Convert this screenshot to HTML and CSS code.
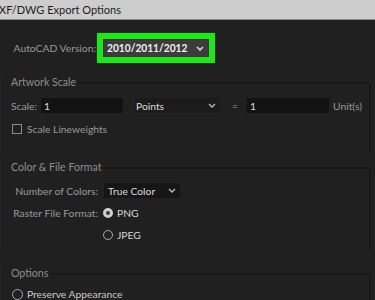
FILE: index.html
```html
<!DOCTYPE html>
<html>
<head>
<meta charset="utf-8">
<link rel="stylesheet" href="styles.css">
</head>
<body>
<div class="titlebar"><span class="title">XF/DWG Export Options</span></div>
<div class="content">
  <div class="form-grid version-row">
    <span class="label">AutoCAD Version:</span>
    <div class="highlight">
      <div class="select version-select">
        <span class="value">2010/2011/2012</span>
        <svg class="chev" width="8" height="5" viewBox="0 0 8 5"><path d="M1 1 L4 4 L7 1" fill="none" stroke="#e0e0e0" stroke-width="1.5"/></svg>
      </div>
    </div>
  </div>

  <section class="group artwork">
    <div class="group-head"><span class="group-title">Artwork Scale</span><i class="rule"></i></div>
    <div class="group-body">
      <div class="scale-row">
        <span class="label">Scale:</span>
        <div class="input input-scale"><span class="value">1</span></div>
        <div class="select points-select">
          <span class="value">Points</span>
          <svg class="chev" width="8" height="5" viewBox="0 0 8 5"><path d="M1 1 L4 4 L7 1" fill="none" stroke="#bdbdbd" stroke-width="1.3"/></svg>
        </div>
        <span class="label eq">=</span>
        <div class="input input-units"><span class="value">1</span></div>
        <span class="label">Unit(s)</span>
      </div>
      <div class="check-row">
        <span class="checkbox"></span>
        <span class="label">Scale Lineweights</span>
      </div>
    </div>
  </section>

  <section class="group color">
    <div class="group-head"><span class="group-title">Color &amp; File Format</span><i class="rule"></i></div>
    <div class="group-body form-grid color-grid">
      <span class="label">Number of Colors:</span>
      <div class="select colors-select">
        <span class="value">True Color</span>
        <svg class="chev" width="8" height="5" viewBox="0 0 8 5"><path d="M1 1 L4 4 L7 1" fill="none" stroke="#bdbdbd" stroke-width="1.3"/></svg>
      </div>
      <span class="label">Raster File Format:</span>
      <div class="radio-item"><span class="radio checked"></span><span class="value">PNG</span></div>
      <span></span>
      <div class="radio-item"><span class="radio"></span><span class="value">JPEG</span></div>
    </div>
  </section>

  <section class="group options">
    <div class="group-head"><span class="group-title">Options</span><i class="rule"></i></div>
    <div class="group-body">
      <div class="radio-item preserve"><span class="radio"></span><span class="value">Preserve Appearance</span></div>
    </div>
  </section>
</div>
</body>
</html>
```

FILE: styles.css
```css
html, body {
  margin: 0;
  padding: 0;
  background: #202020;
  overflow: hidden;
}
body {
  width: 375px;
  height: 300px;
  font-family: Lato, "Liberation Sans", sans-serif;
  font-size: 10.3px;
  color: #9c9c9c;
}
.titlebar {
  height: 19px;
  background: #cdcdcd;
  border-bottom: 1px solid #8e8e8e;
  display: flex;
  align-items: center;
}
.title {
  color: #1c1c1c;
  font-size: 11px;
  margin-left: -1px;
}
.content {
  display: flex;
  flex-direction: column;
}
.label {
  color: #9a9a9a;
  white-space: nowrap;
}
.value {
  color: #dcdcdc;
  white-space: nowrap;
}
.form-grid {
  display: grid;
  grid-template-columns: 87px auto;
  column-gap: 5px;
  align-items: center;
  justify-items: start;
}
.form-grid > .label {
  justify-self: end;
}
.version-row {
  margin-top: 13px;
  padding-left: 10px;
  grid-template-columns: 86px auto;
  column-gap: 1px;
}
.highlight {
  border: 6px solid #22e41c;
  box-shadow: 0 0 1px #1a9a14;
}
.select {
  display: flex;
  align-items: center;
  justify-content: space-between;
  box-sizing: border-box;
}
.version-select {
  width: 106px;
  height: 18px;
  background: #3c3c3c;
  padding: 0 5px 0 4px;
}
.version-select .value {
  color: #f2f2f2;
  font-size: 10.2px;
  font-weight: bold;
  transform: scaleY(1.08);
}
.chev {
  flex: none;
  display: block;
}
.group {
  display: flex;
  flex-direction: column;
  margin-right: 4px;
  border-left: 1px solid #252525;
}
.group-head {
  display: flex;
  height: 14px;
  align-items: center;
  padding-left: 10px;
}
.group-title {
  color: #8e8e8e;
  white-space: nowrap;
  font-size: 10.6px;
}
.rule {
  flex: 1;
  align-self: flex-end;
  height: 5px;
  margin-left: 2px;
  border-top: 2px solid #181818;
  border-right: 2px solid #181818;
}
.group-body {
  border-right: 2px solid #181818;
}
.artwork {
  margin-top: 12px;
}
.artwork .group-body {
  padding: 9px 0 16px 10px;
}
.scale-row {
  display: flex;
  align-items: center;
  height: 15px;
}
.input {
  height: 15px;
  background: #121212;
  box-sizing: border-box;
  padding-left: 3px;
  display: flex;
  align-items: center;
}
.input-scale {
  width: 82px;
  margin-left: 4px;
}
.points-select {
  width: 85px;
  height: 15px;
  margin-left: 12px;
  background: #1b1b1b;
  padding: 0 4px 0 1px;
}
.eq {
  margin-left: 12px;
  width: 15px;
}
.input-units {
  width: 82px;
}
.input-units + .label {
  margin-left: 4px;
}
.check-row {
  display: flex;
  align-items: center;
  height: 14px;
  margin-top: 9px;
}
.checkbox {
  width: 10px;
  height: 10px;
  box-sizing: border-box;
  border: 1px solid #8a8a8a;
  margin-left: 1px;
  margin-right: 5px;
}
.color {
  margin-top: 8px;
}
.color-grid {
  padding: 9px 0 8px 10px;
  row-gap: 8px;
  grid-template-rows: 15px 14px 14px;
}
.colors-select {
  width: 76px;
  height: 15px;
  background: #161616;
  padding: 0 4px 0 4px;
  margin-left: 1px;
}
.radio-item {
  display: flex;
  align-items: center;
  height: 14px;
}
.radio {
  width: 10px;
  height: 10px;
  box-sizing: border-box;
  border-radius: 50%;
  border: 1px solid #a8a8a8;
  margin-right: 4px;
}
.radio.checked {
  border: 3px solid #cfcfcf;
  background: #3a3a3a;
}
.options {
  margin-top: 16px;
}
.options .group-body {
  padding: 7px 0 0 11px;
}
.preserve .radio {
  width: 11px;
  height: 11px;
}
.radio-item .value {
  color: #d6d6d6;
}
.preserve .value {
  color: #c8c8c8;
}
```
